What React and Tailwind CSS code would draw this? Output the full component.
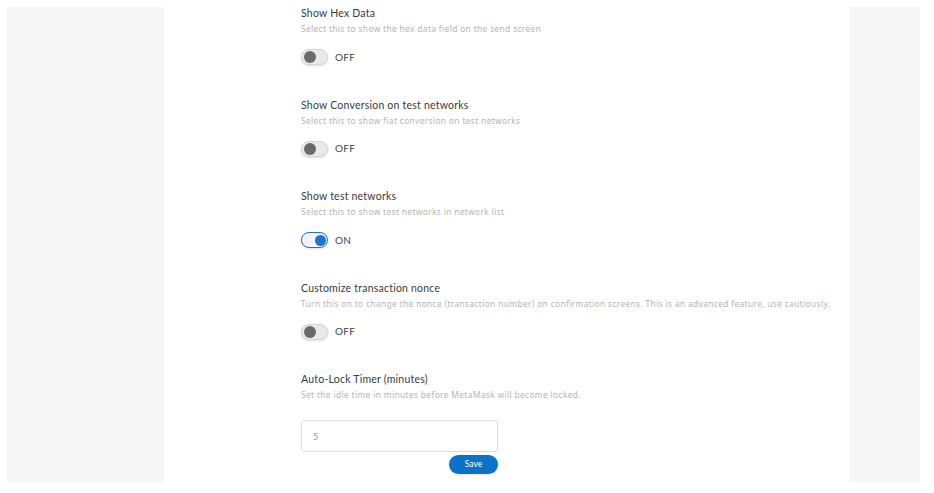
import { useState } from "react";

function Toggle({ on }) {
  return (
    <div className="flex items-center gap-[7px]">
      <div
        className={
          on
            ? "w-[27px] h-[16px] rounded-full border-[1.5px] border-[#1b73d3] bg-[#f2f4f6] flex items-center justify-end px-[1.5px] shadow-sm"
            : "w-[27px] h-[16px] rounded-full border border-[#d6d6d6] bg-[#e9e9e9] flex items-center justify-start px-[1.5px] shadow-sm"
        }
      >
        <div className={on ? "w-[11px] h-[11px] rounded-full bg-[#1b73d3]" : "w-[12px] h-[12px] rounded-full bg-[#6a6a6a]"} />
      </div>
      <span className="text-[10px] text-[#444] tracking-wide">{on ? "ON" : "OFF"}</span>
    </div>
  );
}

function Setting({ title, desc, on }) {
  return (
    <div className="h-[91.5px]">
      <div className="text-[10.5px] leading-[12px] tracking-[0.22px] text-[#3a3a3a]">{title}</div>
      <div className="text-[8.4px] leading-[12px] tracking-[0.35px] mt-[4px] text-[#b5b5b5]" style={{ fontFamily: "'Noto Sans', sans-serif" }}>{desc}</div>
      <div className="mt-[14px]">
        <Toggle on={on} />
      </div>
    </div>
  );
}

export default function App() {
  const [timer, setTimer] = useState("5");

  const settings = [
    { title: "Show Hex Data", desc: "Select this to show the hex data field on the send screen", on: false },
    { title: "Show Conversion on test networks", desc: "Select this to show fiat conversion on test networks", on: false },
    { title: "Show test networks", desc: "Select this to show test networks in network list", on: true },
    {
      title: "Customize transaction nonce",
      desc: "Turn this on to change the nonce (transaction number) on confirmation screens. This is an advanced feature, use cautiously.",
      on: false,
    },
  ];

  return (
    <div className="w-[934px] h-[493px] bg-white flex pt-[7px] pb-[11px] pl-[7px] pr-[14px] overflow-hidden" style={{ fontFamily: "Lato, 'Noto Sans', sans-serif" }}>
      <div className="w-[157px] bg-[#f6f6f6]" />
      <div className="flex-1 bg-white pl-[137px]">
        {settings.map((s) => (
          <Setting key={s.title} {...s} />
        ))}
        <div>
          <div className="text-[10.5px] leading-[12px] tracking-[0.22px] text-[#3a3a3a]">Auto-Lock Timer (minutes)</div>
          <div className="text-[8.4px] leading-[12px] tracking-[0.35px] mt-[4px] text-[#b5b5b5]" style={{ fontFamily: "'Noto Sans', sans-serif" }}>
            Set the idle time in minutes before MetaMask will become locked.
          </div>
          <div className="w-[197px] mt-[19px] flex flex-col items-end">
            <input
              value={timer}
              onChange={(e) => setTimer(e.target.value)}
              className="w-[197px] h-[32px] border border-[#dcdcdc] rounded-[3px] px-[11px] text-[9px] text-[#999] outline-none"
            />
            <button className="mt-[3px] w-[49px] h-[19px] rounded-full bg-[#0a72c9] text-white text-[8.5px] shadow-sm">
              Save
            </button>
          </div>
        </div>
      </div>
      <div className="w-[71px] bg-[#f6f6f6]" />
    </div>
  );
}
